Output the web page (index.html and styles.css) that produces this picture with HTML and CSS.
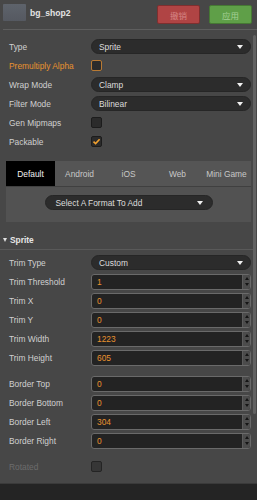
FILE: index.html
```html
<!DOCTYPE html>
<html lang="en">
<head>
  <meta charset="UTF-8">
  <title>Texture Inspector</title>
  <link rel="stylesheet" href="styles.css">
</head>
<body>
  <div class="inspector">
    <!-- En-tête de l'asset -->
    <header class="asset-head">
      <div class="thumb"></div>
      <div class="asset-name">bg_shop2</div>
      <div class="btn btn-revert">撤销</div>
      <div class="btn btn-apply">应用</div>
    </header>

    <div class="scroll-area">
      <div class="content">
        <!-- Propriétés de la texture -->
        <section class="props">
          <div class="row">
            <label>Type</label>
            <div class="select"><span>Sprite</span><i class="arrow"></i></div>
          </div>
          <div class="row">
            <label class="changed">Premultiply Alpha</label>
            <div class="check check-changed"></div>
          </div>
          <div class="row">
            <label>Wrap Mode</label>
            <div class="select"><span>Clamp</span><i class="arrow"></i></div>
          </div>
          <div class="row">
            <label>Filter Mode</label>
            <div class="select"><span>Bilinear</span><i class="arrow"></i></div>
          </div>
          <div class="row">
            <label>Gen Mipmaps</label>
            <div class="check"></div>
          </div>
          <div class="row">
            <label>Packable</label>
            <div class="check">
              <svg width="9" height="9" viewBox="0 0 9 9"><path d="M1.5 4.6 L3.6 6.6 L7.6 2.2" fill="none" stroke="#f0a030" stroke-width="1.6"/></svg>
            </div>
          </div>
        </section>

        <!-- Plateformes -->
        <section class="platforms">
          <div class="tabs">
            <div class="tab active">Default</div>
            <div class="tab">Android</div>
            <div class="tab">iOS</div>
            <div class="tab">Web</div>
            <div class="tab">Mini Game</div>
          </div>
          <div class="tab-panel">
            <div class="select format-select"><span>Select A Format To Add</span><i class="arrow"></i></div>
          </div>
        </section>

        <!-- Sprite -->
        <section class="sprite">
          <div class="section-head"><i class="fold"></i>Sprite</div>
          <div class="row">
            <label>Trim Type</label>
            <div class="select"><span>Custom</span><i class="arrow"></i></div>
          </div>
          <div class="row">
            <label>Trim Threshold</label>
            <div class="num"><span>1</span><div class="spin"><i class="up"></i><i class="down"></i></div></div>
          </div>
          <div class="row">
            <label>Trim X</label>
            <div class="num"><span>0</span><div class="spin"><i class="up"></i><i class="down"></i></div></div>
          </div>
          <div class="row">
            <label>Trim Y</label>
            <div class="num"><span>0</span><div class="spin"><i class="up"></i><i class="down"></i></div></div>
          </div>
          <div class="row">
            <label>Trim Width</label>
            <div class="num"><span>1223</span><div class="spin"><i class="up"></i><i class="down"></i></div></div>
          </div>
          <div class="row">
            <label>Trim Height</label>
            <div class="num"><span>605</span><div class="spin"><i class="up"></i><i class="down"></i></div></div>
          </div>

          <div class="group">
            <div class="row">
              <label>Border Top</label>
              <div class="num"><span>0</span><div class="spin"><i class="up"></i><i class="down"></i></div></div>
            </div>
            <div class="row">
              <label>Border Bottom</label>
              <div class="num"><span>0</span><div class="spin"><i class="up"></i><i class="down"></i></div></div>
            </div>
            <div class="row">
              <label>Border Left</label>
              <div class="num"><span>304</span><div class="spin"><i class="up"></i><i class="down"></i></div></div>
            </div>
            <div class="row">
              <label>Border Right</label>
              <div class="num"><span>0</span><div class="spin"><i class="up"></i><i class="down"></i></div></div>
            </div>
          </div>

          <div class="row group">
            <label class="disabled">Rotated</label>
            <div class="check check-disabled"></div>
          </div>
        </section>
      </div>

      <div class="scrollbar"><div class="scroll-thumb"></div></div>
    </div>

    <footer class="bottom-bar"></footer>
  </div>
</body>
</html>
```

FILE: styles.css
```css
/* Reset minimal */
* { box-sizing: border-box; margin: 0; padding: 0; }

body {
  font-family: "Liberation Sans", Arial, sans-serif;
  font-size: 8.4px;
  background: #474747;
  color: #d0d0d0;
  width: 257px;
  height: 500px;
  overflow: hidden;
}

.inspector {
  display: flex;
  flex-direction: column;
  height: 500px;
}

/* En-tête */
.asset-head {
  display: flex;
  align-items: flex-start;
  height: 30px;
  margin-left: 3px;
  padding: 4px 5px 0 0;
  border-bottom: 1px solid #5e5e5e;
}
.thumb {
  width: 23px;
  height: 17px;
  background: linear-gradient(#5e636b, #555961);
  border-radius: 1px;
}
.asset-name {
  flex: 1;
  margin: 4px 0 0 4px;
  font-weight: bold;
  font-size: 8.6px;
  color: #e4e4e4;
}
.btn {
  width: 43px;
  height: 19px;
  margin-top: 1px;
  display: flex;
  align-items: center;
  justify-content: center;
  border-radius: 2px;
  font-family: "Noto Sans CJK SC", sans-serif;
  font-size: 8.5px;
}
.btn-revert {
  background: #b04444;
  border: 1px solid #7e2f2f;
  color: #d58585;
}
.btn-apply {
  margin-left: 9px;
  background: #5f9f48;
  border: 1px solid #467834;
  color: #a3cf95;
}

/* Zone défilante */
.scroll-area {
  flex: 1;
  display: flex;
  overflow: hidden;
}
.content {
  flex: 1;
}
.scrollbar {
  width: 4px;
  padding-top: 5px;
}
.scroll-thumb {
  width: 3px;
  height: 379px;
  background: #626262;
  border-radius: 2px;
}

/* Lignes de propriétés */
.props {
  padding-top: 7px;
}
.row {
  display: flex;
  align-items: center;
  height: 19px;
  padding: 0 2px 0 9px;
}
.row label {
  width: 82px;
  white-space: nowrap;
}
.row label.changed { color: #e8922f; }
.row label.disabled { color: #6c6c6c; }

.select {
  flex: 1;
  height: 15px;
  display: flex;
  align-items: center;
  justify-content: space-between;
  padding: 0 7px;
  background: #2c2c2c;
  border: 1px solid #262626;
  border-radius: 8px;
  color: #dcdcdc;
}
.arrow {
  width: 0;
  height: 0;
  border-left: 3px solid transparent;
  border-right: 3px solid transparent;
  border-top: 4px solid #f0f0f0;
}

.check {
  width: 11px;
  height: 11px;
  display: flex;
  align-items: center;
  justify-content: center;
  background: #2b2b2b;
  border: 1px solid #1c1c1c;
  border-radius: 2px;
}
.check-changed { border-color: #b87a34; }
.check-disabled { background: #363636; border-color: #242424; }

/* Onglets plateformes */
.platforms {
  margin: 10px 2px 0 6px;
}
.tabs {
  display: flex;
  height: 25px;
  background: #555555;
}
.tab {
  flex: 1;
  display: flex;
  align-items: center;
  justify-content: center;
  color: #c8c8c8;
}
.tab.active {
  background: #000;
  color: #f2f2f2;
}
.tab-panel {
  height: 36px;
  padding-top: 8px;
  display: flex;
  justify-content: center;
  background: #525252;
  border-top: 1px solid #404040;
}
.format-select {
  flex: none;
  width: 168px;
  padding: 0 9px 0 10px;
}

/* Section Sprite */
.sprite {
  margin-top: 10px;
}
.section-head {
  display: flex;
  align-items: center;
  height: 18px;
  padding: 0 0 1px 3px;
  border-bottom: 1px solid #595959;
  font-weight: bold;
  color: #e6e6e6;
  margin-bottom: 3px;
}
.fold {
  width: 0;
  height: 0;
  margin-right: 3px;
  border-left: 2.5px solid transparent;
  border-right: 2.5px solid transparent;
  border-top: 4px solid #e0e0e0;
}

.num {
  flex: 1;
  height: 16px;
  display: flex;
  align-items: center;
  background: #232323;
  border: 1px solid #6a6a6a;
  border-radius: 3px;
  color: #e8922f;
  overflow: hidden;
}
.num span {
  flex: 1;
  padding-left: 5px;
}
.spin {
  width: 8px;
  height: 100%;
  display: flex;
  flex-direction: column;
  align-items: center;
  justify-content: space-evenly;
  background: #4c4c4c;
  border-left: 1px solid #5c5c5c;
}
.spin i {
  width: 0;
  height: 0;
  border-left: 2px solid transparent;
  border-right: 2px solid transparent;
}
.spin .up { border-bottom: 3px solid #151515; }
.spin .down { border-top: 3px solid #151515; }

.group {
  margin-top: 7px;
}

/* Barre du bas */
.bottom-bar {
  height: 17px;
  background: #242424;
  border-top: 1px solid #3a3a3a;
}
```
